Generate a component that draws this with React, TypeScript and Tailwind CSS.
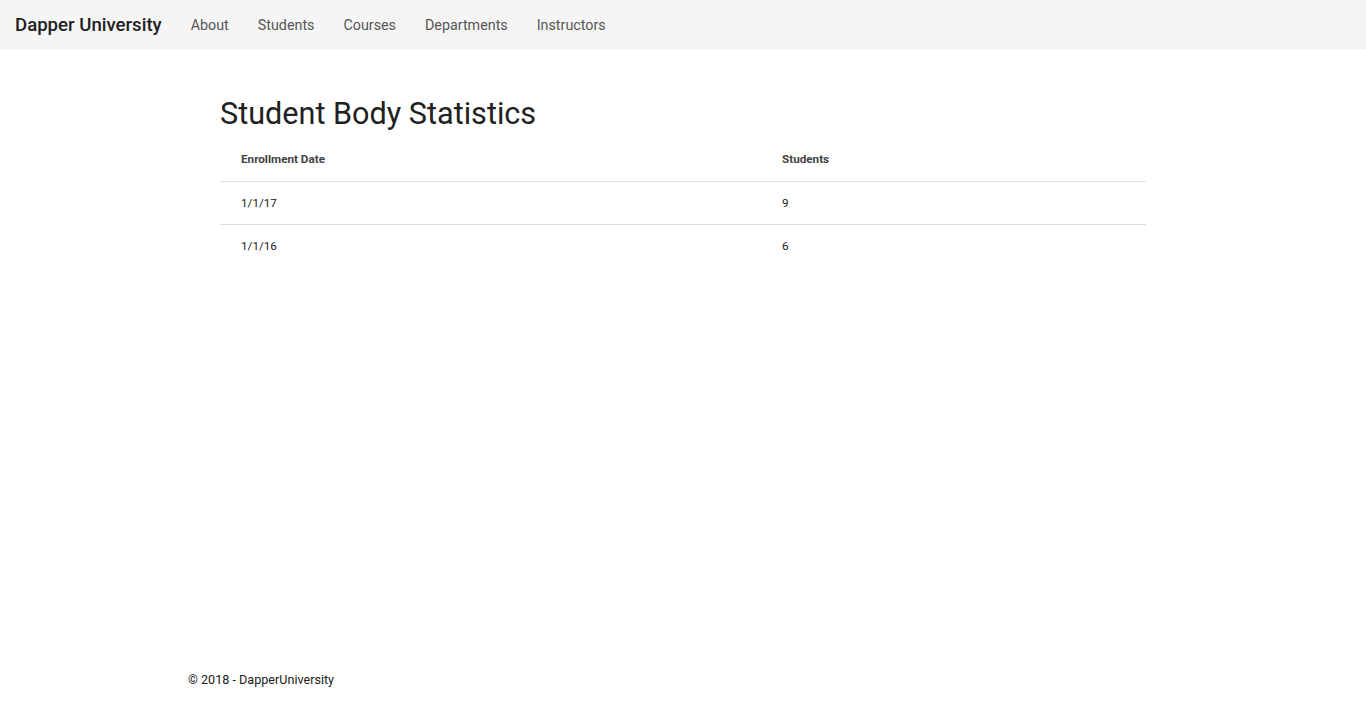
import React from 'react';

const navLinks = ['About', 'Students', 'Courses', 'Departments', 'Instructors'];

const stats = [
  { date: '1/1/17', count: 9 },
  { date: '1/1/16', count: 6 },
];

export default function App() {
  return (
    <div className="min-h-screen flex flex-col bg-white text-[#212121]" style={{ fontFamily: 'Roboto, "Liberation Sans", sans-serif' }}>
      {/* navbar */}
      <header className="h-[50px] bg-[#f5f5f5] flex items-center px-[15px] pt-[2px] flex-shrink-0">
        <span className="text-[18.6px] font-medium text-[#212121] mr-[29px]">Dapper University</span>
        <nav className="flex items-center gap-[29px]">
          {navLinks.map((l) => (
            <a key={l} href="#" className="text-[14.3px] text-[#555555]">
              {l}
            </a>
          ))}
        </nav>
      </header>

      <main className="flex-1 w-[990px] mx-auto px-8 pt-[46px]">
        <h1 className="text-[30.6px] leading-[36px] font-normal text-[#212121]">Student Body Statistics</h1>
        <table className="w-full mt-[5px] border-collapse text-[11.7px]">
          <thead>
            <tr className="h-[44px] border-b border-[#dddddd]">
              <th className="w-[541px] text-left pl-[21px] pt-[2px] font-bold text-[#424242]">Enrollment Date</th>
              <th className="text-left pl-[21px] pt-[2px] font-bold text-[#424242]">Students</th>
            </tr>
          </thead>
          <tbody>
            {stats.map((s, i) => (
              <tr key={s.date} className={`h-[43px] ${i < stats.length - 1 ? 'border-b border-[#dddddd]' : ''}`}>
                <td className="pl-[21px] pt-[2px] text-[#212121]">{s.date}</td>
                <td className="pl-[21px] pt-[2px] text-[#212121]">{s.count}</td>
              </tr>
            ))}
          </tbody>
        </table>
      </main>

      <footer className="w-[990px] mx-auto pb-[12px]">
        <p className="text-[12.6px] text-[#212121]">© 2018 - DapperUniversity</p>
      </footer>
    </div>
  );
}
